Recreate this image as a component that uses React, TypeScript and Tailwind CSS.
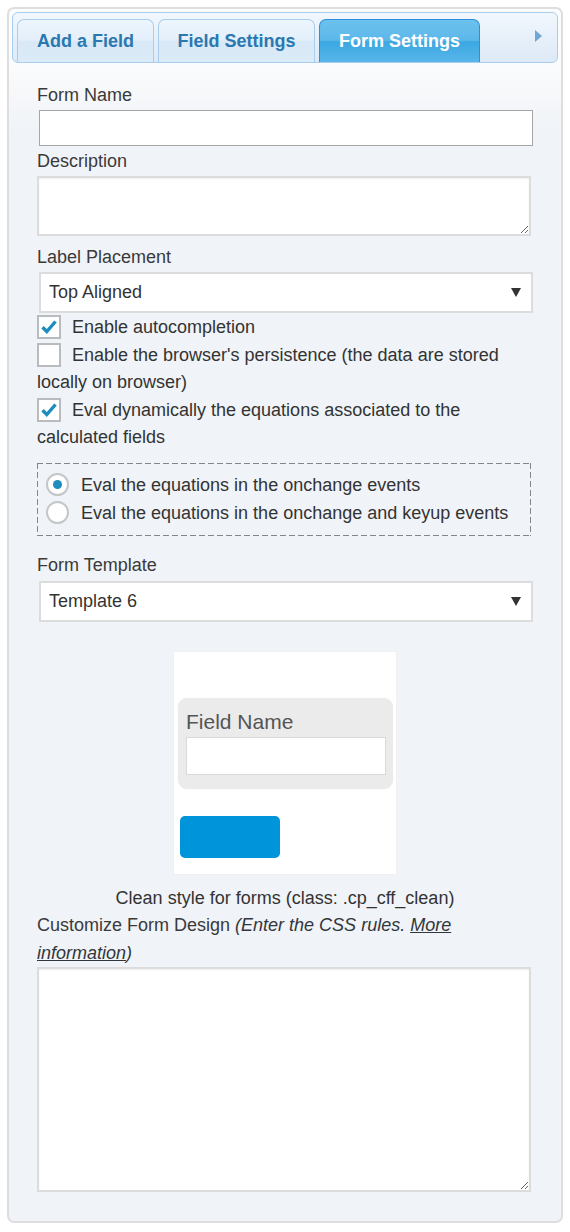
import React from "react";

const tabs = [
  { label: "Add a Field", w: "w-[137px]", active: false },
  { label: "Field Settings", w: "w-[157px]", active: false },
  { label: "Form Settings", w: "w-[161px]", active: true },
];

function Check({ checked }: { checked: boolean }) {
  return (
    <span className="inline-flex w-[24px] h-[24px] align-middle relative -top-[1px] mr-[11px] items-center justify-center border-2 border-[#b9bcbf] bg-white">
      {checked && (
        <svg width="18" height="18" viewBox="0 0 18 18">
          <path d="M2.5 9.2 L6.8 13.5 L15.5 3.5" fill="none" stroke="#1e8cbe" strokeWidth="3.4" />
        </svg>
      )}
    </span>
  );
}

function Radio({ checked }: { checked: boolean }) {
  return (
    <span className="inline-flex w-[23px] h-[23px] rounded-full align-middle relative -top-[1px] mr-[12px] items-center justify-center border-2 border-[#c4c6c8] bg-white">
      {checked && <span className="w-[9px] h-[9px] rounded-full bg-[#1e8cbe]" />}
    </span>
  );
}

function Select({ value }: { value: string }) {
  return (
    <div className="ml-[2px] h-[41px] flex items-center justify-between border-2 border-[#dcdcdc] bg-white pl-[8px] pr-[10px] text-[#333]">
      <span>{value}</span>
      <svg width="10" height="9" viewBox="0 0 10 9">
        <path d="M0 0 H10 L5 9 Z" fill="#333" />
      </svg>
    </div>
  );
}

export default function App() {
  return (
    <div className="w-[570px] h-[1232px] bg-white pt-[7px] pl-[7px] font-['Liberation_Sans',Arial,sans-serif] text-[18px] text-[#3a3a3a]">
      <div className="w-[556px] h-[1216px] rounded-[7px] border-2 border-[#dedede] p-[3px] bg-[linear-gradient(to_bottom,#fbfcfd,#fafbfc_60px,#f0f3f7_120px)]">
        {/* Tab bar */}
        <div className="h-[51px] flex items-end gap-[4px] pl-[4px] rounded-[6px] border border-[#a9cdec] bg-[linear-gradient(to_bottom,#f1f7fd,#dde9f6)]">
          {tabs.map((t) =>
            t.active ? (
              <div
                key={t.label}
                className={`${t.w} h-[43px] flex items-center justify-center rounded-t-[7px] border border-b-0 border-[#2b8fdc] bg-[linear-gradient(to_bottom,#6cc1ee,#5cb8ea_48%,#3ca7e2_52%,#58b6e9)] font-bold text-white`}
              >
                {t.label}
              </div>
            ) : (
              <div
                key={t.label}
                className={`${t.w} h-[43px] flex items-center justify-center rounded-t-[7px] border border-b-0 border-[#a9cdec] bg-[linear-gradient(to_bottom,#eef6fd,#e3effa_48%,#d8e8f6_52%,#dcebf8)] font-bold text-[#2a78b0]`}
              >
                {t.label}
              </div>
            )
          )}
          <div className="ml-auto mr-[15px] self-start mt-[17px]">
            <svg width="7" height="12" viewBox="0 0 7 12">
              <path d="M0 0 L7 6 L0 12 Z" fill="#6fa8d6" />
            </svg>
          </div>
        </div>

        {/* Form settings */}
        <div className="px-[25px] pt-[19px] leading-[27px]">
          <div>Form Name</div>
          <input
            readOnly
            className="block mt-[1px] ml-[2px] w-[494px] h-[36px] border border-[#a6a6a6] bg-white"
          />
          <div className="mt-[2px]">Description</div>
          <textarea
            readOnly
            className="block mt-[1px] w-[494px] h-[60px] border-2 border-[#dcdcdc] bg-white shadow-[inset_0_1px_2px_rgba(0,0,0,0.07)]"
          />
          <div className="mt-[8px]">Label Placement</div>
          <div className="mt-[1px]">
            <Select value="Top Aligned" />
          </div>

          <div className="mt-[1px] leading-[27.5px] text-[#333]">
            <div>
              <Check checked />
              Enable autocompletion
            </div>
            <div>
              <Check checked={false} />
              Enable the browser's persistence (the data are stored locally on browser)
            </div>
            <div>
              <Check checked />
              Eval dynamically the equations associated to the calculated fields
            </div>
          </div>

          {/* dashed group */}
          <div className="mt-[11px] mr-[2px] pl-[9px] pt-[8px] pb-[9px] leading-[28px] text-[#333] [background:repeating-linear-gradient(90deg,#858585_0_6px,transparent_6px_9px)_top/100%_1px_no-repeat,repeating-linear-gradient(90deg,#858585_0_6px,transparent_6px_9px)_bottom/100%_1px_no-repeat,repeating-linear-gradient(180deg,#858585_0_6px,transparent_6px_9px)_left/1px_100%_no-repeat,repeating-linear-gradient(180deg,#858585_0_6px,transparent_6px_9px)_right/1px_100%_no-repeat]">
            <div>
              <Radio checked />
              Eval the equations in the onchange events
            </div>
            <div>
              <Radio checked={false} />
              Eval the equations in the onchange and keyup events
            </div>
          </div>

          <div className="mt-[16px]">Form Template</div>
          <div className="mt-[2px]">
            <Select value="Template 6" />
          </div>

          {/* Template preview */}
          <div className="mt-[29px] mx-auto w-[224px] h-[224px] bg-white border border-[#f0f0f0] pt-[46px] pl-[4px]">
            <div className="w-[215px] h-[91px] rounded-[9px] bg-[#ebebeb] pl-[8px] pt-[12px] shadow-[0_0_2px_rgba(0,0,0,0.06)]">
              <div className="text-[21px] leading-[24px] text-[#555]">Field Name</div>
              <div className="mt-[3px] w-[200px] h-[38px] bg-white border border-[#dadada]" />
            </div>
            <div className="mt-[27px] ml-[2px] w-[100px] h-[42px] rounded-[5px] bg-[#0095da]" />
          </div>

          <div className="mt-[10px] text-center leading-[27.5px] text-[#333]">
            Clean style for forms (class: .cp_cff_clean)
          </div>
          <div className="leading-[27.5px] text-[#3a3a3a]">
            Customize Form Design{" "}
            <i className="text-[#32373c]">
              (Enter the CSS rules. <span className="underline">More information</span>)
            </i>
          </div>
          <textarea
            readOnly
            className="block w-[494px] h-[225px] border-2 border-[#dcdcdc] bg-white shadow-[inset_0_1px_2px_rgba(0,0,0,0.07)]"
          />
        </div>
      </div>
    </div>
  );
}
